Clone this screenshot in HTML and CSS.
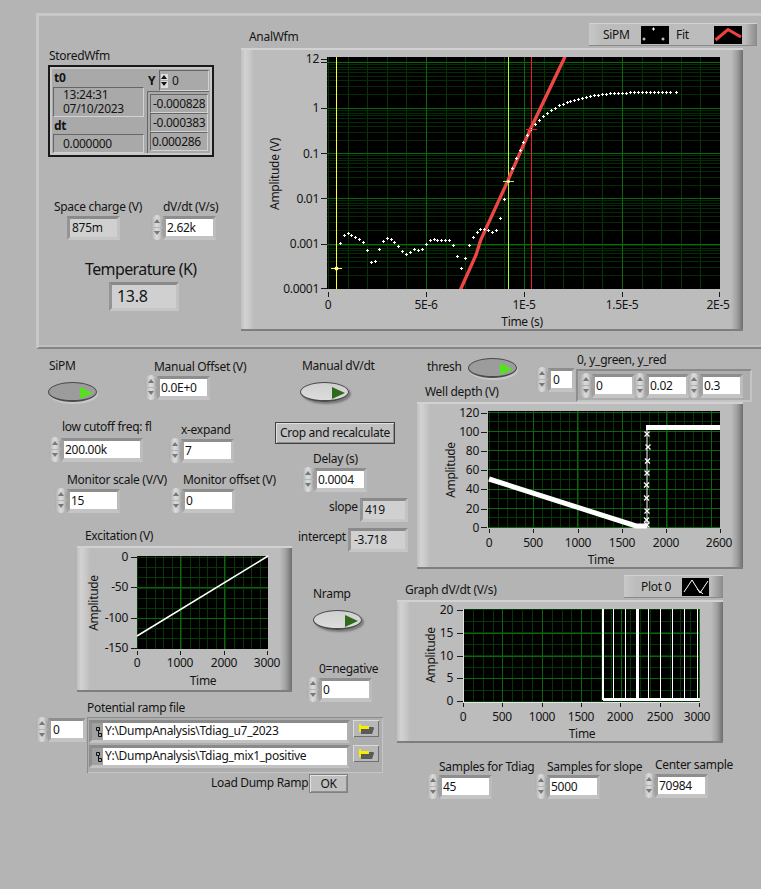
FILE: index.html
```html
<!DOCTYPE html>
<html lang="en">
<head>
<meta charset="utf-8">
<title>AnalWfm front panel</title>
<link rel="stylesheet" href="styles.css">
</head>
<body>
<main class="panel">
  <svg width="0" height="0" class="defs">
    <defs>
      <marker id="plus" markerUnits="userSpaceOnUse" markerWidth="15" markerHeight="15" refX="7.5" refY="7.5" viewBox="0 0 15 15"><path d="M3 7.5H12M7.5 3V12" stroke="#fff" stroke-width="3" shape-rendering="crispEdges"/></marker>
      <marker id="cross" markerUnits="userSpaceOnUse" markerWidth="7" markerHeight="7" refX="3.5" refY="3.5" viewBox="0 0 7 7"><path d="M1 1L6 6M6 1L1 6" stroke="#fff" stroke-width="1.2"/></marker>
      <path id="dec" d="M327 -13.5H720M327 -21.5H720M327 -27.5H720M327 -31.5H720M327 -35.5H720M327 -38.5H720M327 -40.5H720M327 -43.5H720"/>
      <symbol id="folder" viewBox="0 0 15 10"><path d="M2 3H14.500L15 4.500L13 10H2Z" fill="#5a5a5a"/><path d="M0 0H2V2H10V5H2V8H0Z" fill="#f4f000"/></symbol>
      <symbol id="pathicon" viewBox="0 0 6 10"><path d="M.5.5H3.500V3.500H.5ZM2.500 3.500V6.500M2.500 6.500H5.500V9.500H2.500Z" fill="none" stroke="#111"/></symbol>
    </defs>
  </svg>

  <div class="frame-top"></div>

  <!-- StoredWfm -->
  <span class="lbl l-stored">StoredWfm</span>
  <section class="wfm">
    <div class="wfm-left">
      <b class="wfm-head">t0</b>
      <div class="sunk stamp"><span>13:24:31</span><span>07/10/2023</span></div>
      <b class="wfm-head">dt</b>
      <div class="sunk delta">0.000000</div>
    </div>
    <div class="wfm-right">
      <div class="wfm-y">
        <b>Y</b>
        <div class="sunk yidx"><span class="mini"><i></i><i></i></span><span>0</span></div>
      </div>
      <div class="sunk arr">
        <div class="cell">-0.000828</div>
        <div class="cell">-0.000383</div>
        <div class="cell cell-s">0.000286</div>
      </div>
    </div>
  </section>

  <span class="lbl l-space">Space charge (V)</span>
  <div class="ind i-space">875m</div>
  <span class="lbl l-dvdt">dV/dt (V/s)</span>
  <div class="num n-dvdt"><span class="spin"><i></i><i></i></span><span class="val">2.62k</span></div>
  <span class="lbl lbl-big l-temp">Temperature (K)</span>
  <div class="ind ind-big i-temp">13.8</div>

  <!-- AnalWfm graph -->
  <span class="lbl l-anal">AnalWfm</span>
  <div class="legend lg-anal">
    <span>SiPM</span>
    <svg class="swatch" viewBox="0 0 28 18"><path d="M11 3H14M12.500 1.500V4.500M1.500 13H4.500M3 11.500V14.500M20.500 13H23.500M22 11.500V14.500" stroke="#fff" fill="none"/></svg>
    <span class="lg-gap">Fit</span>
    <svg class="swatch" viewBox="0 0 28 18"><path d="M1.500 14L14 3.500L27 11" stroke="#f04040" stroke-width="3" fill="none"/></svg>
  </div>
  <div class="graph g-anal">
    <svg class="plot" width="502" height="283" viewBox="241 48 502 283">
      <rect x="327" y="57" width="393" height="232"/>
      <g class="minor">
        <line x1="328" x2="720" y1="173" y2="173" stroke-width="232" stroke-dasharray="1 18.6"/>
        <use href="#dec" y="289"/><use href="#dec" y="244"/><use href="#dec" y="199"/><use href="#dec" y="154"/><use href="#dec" y="108"/>
      </g>
      <g class="major">
        <line x1="426" x2="720" y1="173" y2="173" stroke-width="232" stroke-dasharray="1 97"/>
        <path d="M327 62.500H720M327 108.500H720M327 153.500H720M327 198.500H720M327 244.500H720"/>
      </g>
      <path class="tick" d="M321 59.500H327M321 62.500H327M321 108.500H327M321 153.500H327M321 198.500H327M321 244.500H327M321 288.500H327M328.500 292V297M426.500 292V297M524.500 292V297M622.500 292V297M719.500 292V297"/>
      <path class="cur" stroke="#ffff20" d="M336.500 57V289"/>
      <path class="cur" stroke="#a8ff30" d="M508.500 57V289"/>
      <path class="cur" stroke="#f02020" d="M531.500 57V289"/>
      <svg x="327" y="57" width="393" height="232" viewBox="261 141 1179 696">
        <polyline class="fit" points="660,842 708,735 722,690 800,520 870,360 975,140"/>
        <polyline class="dots" points="302,701 314,676 326,670 335,676 347,682 359,688 371,697 383,721 395,757 407,754 419,718 431,694 443,685 455,688 464,697 476,709 488,724 500,733 512,727 524,718 536,721 548,718 560,703 572,691 584,688 592,691 605,691 617,691 629,691 641,706 653,739 665,775 677,745 689,706 701,682 713,667 722,658 734,658 746,661 758,667 770,661 782,626 794,568 806,515 818,476 830,445 842,421 851,397 863,376 875,358 887,343 899,331 911,319 923,310 935,301 947,295 959,286 971,283 983,277 992,274 1004,271 1016,268 1028,265 1040,262 1052,259 1064,256 1076,255 1088,253 1100,252 1112,250 1124,250 1136,250 1148,250 1160,250 1172,247 1184,247 1196,247 1208,247 1220,247 1232,247 1244,247 1256,247 1268,247 1280,247 1292,247 1310,247"/>
      </svg>
      <path class="cur" stroke="#ffff20" d="M331 268.500H342"/><circle cx="336.500" cy="268.500" r="2" fill="#ffffa0"/>
      <path class="cur" stroke="#a8ff30" d="M503 181.500H514"/><circle cx="508.500" cy="181.500" r="1.500" fill="#e8ffc0"/>
      <path class="cur" stroke="#f02020" d="M526 129.500H537"/>
      <g class="ax">
        <text x="319" y="63" text-anchor="end">12</text>
        <text x="319" y="112" text-anchor="end">1</text>
        <text x="319" y="158" text-anchor="end">0.1</text>
        <text x="319" y="203" text-anchor="end">0.01</text>
        <text x="319" y="248" text-anchor="end">0.001</text>
        <text x="319" y="293" text-anchor="end">0.0001</text>
        <text x="328" y="309" text-anchor="middle">0</text>
        <text x="426" y="309" text-anchor="middle">5E-6</text>
        <text x="524" y="309" text-anchor="middle">1E-5</text>
        <text x="622" y="309" text-anchor="middle">1.5E-5</text>
        <text x="718" y="309" text-anchor="middle">2E-5</text>
        <text x="522" y="326" text-anchor="middle">Time (s)</text>
        <text transform="translate(279 174) rotate(-90)" text-anchor="middle">Amplitude (V)</text>
      </g>
    </svg>
  </div>

  <!-- Middle controls -->
  <span class="lbl l-sipm">SiPM</span>
  <div class="toggle on t-sipm"></div>
  <span class="lbl l-manoff">Manual Offset (V)</span>
  <div class="num n-manoff"><span class="spin"><i></i><i></i></span><span class="val">0.0E+0</span></div>
  <span class="lbl l-mandv">Manual dV/dt</span>
  <div class="toggle off t-mandv"></div>

  <span class="lbl l-low">low cutoff freq: fl</span>
  <div class="num n-low"><span class="spin"><i></i><i></i></span><span class="val val-wide">200.00k</span></div>
  <span class="lbl l-xexp">x-expand</span>
  <div class="num n-xexp"><span class="spin"><i></i><i></i></span><span class="val">7</span></div>
  <button class="btn b-crop">Crop and recalculate</button>
  <span class="lbl l-delay">Delay (s)</span>
  <div class="num n-delay"><span class="spin"><i></i><i></i></span><span class="val">0.0004</span></div>
  <span class="lbl l-monscale">Monitor scale (V/V)</span>
  <div class="num n-monscale"><span class="spin"><i></i><i></i></span><span class="val">15</span></div>
  <span class="lbl l-monoff">Monitor offset (V)</span>
  <div class="num n-monoff"><span class="spin"><i></i><i></i></span><span class="val">0</span></div>
  <span class="lbl l-slope">slope</span>
  <div class="ind i-slope">419</div>
  <span class="lbl l-intercept">intercept</span>
  <div class="ind i-intercept">-3.718</div>

  <!-- Excitation graph -->
  <span class="lbl l-exc">Excitation (V)</span>
  <div class="graph g-exc">
    <svg class="plot" width="215" height="146" viewBox="77 546 215 146">
      <rect x="137" y="556" width="131" height="93"/>
      <g class="minor">
        <line x1="137" x2="268" y1="602.500" y2="602.500" stroke-width="93" stroke-dasharray="1 7.800"/>
        <line x1="202.500" x2="202.500" y1="557" y2="649" stroke-width="131" stroke-dasharray="1 9.170"/>
      </g>
      <g class="major">
        <line x1="180" x2="268" y1="602.500" y2="602.500" stroke-width="93" stroke-dasharray="1 43"/>
        <path d="M137 587.500H268M137 618.500H268"/>
      </g>
      <path class="tick" d="M131 557.500H137M131 587.500H137M131 618.500H137M131 648.500H137M137.500 651V655M180.500 651V655M224.500 651V655M267.500 651V655"/>
      <path class="trace" d="M137 636L268 556"/>
      <g class="ax">
        <text x="128" y="561" text-anchor="end">0</text>
        <text x="128" y="591" text-anchor="end">-50</text>
        <text x="128" y="622" text-anchor="end">-100</text>
        <text x="128" y="652" text-anchor="end">-150</text>
        <text x="137" y="667" text-anchor="middle">0</text>
        <text x="180" y="667" text-anchor="middle">1000</text>
        <text x="224" y="667" text-anchor="middle">2000</text>
        <text x="267" y="667" text-anchor="middle">3000</text>
        <text x="203" y="685" text-anchor="middle">Time</text>
        <text transform="translate(98 603) rotate(-90)" text-anchor="middle">Amplitude</text>
      </g>
    </svg>
  </div>

  <span class="lbl l-nramp">Nramp</span>
  <div class="toggle off t-nramp"></div>
  <span class="lbl l-neg">0=negative</span>
  <div class="num n-neg"><span class="spin"><i></i><i></i></span><span class="val">0</span></div>

  <!-- Potential ramp file -->
  <span class="lbl l-ramp">Potential ramp file</span>
  <div class="num n-idx1"><span class="spin"><i></i><i></i></span><span class="val val-idx">0</span></div>
  <div class="paths">
    <div class="path-row">
      <div class="path"><span class="path-ico"><svg width="6" height="10"><use href="#pathicon"/></svg></span><span class="path-txt">Y:\DumpAnalysis\Tdiag_u7_2023</span></div>
      <button class="browse"><svg width="15" height="10"><use href="#folder"/></svg></button>
    </div>
    <div class="path-row">
      <div class="path"><span class="path-ico"><svg width="6" height="10"><use href="#pathicon"/></svg></span><span class="path-txt">Y:\DumpAnalysis\Tdiag_mix1_positive</span></div>
      <button class="browse"><svg width="15" height="10"><use href="#folder"/></svg></button>
    </div>
  </div>
  <span class="lbl l-load">Load Dump Ramp</span>
  <button class="btn b-ok">OK</button>

  <!-- Right column -->
  <span class="lbl l-thresh">thresh</span>
  <div class="toggle on t-thresh"></div>
  <div class="num n-idx0"><span class="spin"><i></i><i></i></span><span class="val val-idx">0</span></div>
  <span class="lbl l-yset">0, y_green, y_red</span>
  <div class="yset">
    <div class="num-in"><span class="spin"><i></i><i></i></span><span class="val val-s">0</span></div>
    <div class="num-in"><span class="spin"><i></i><i></i></span><span class="val val-s">0.02</span></div>
    <div class="num-in"><span class="spin"><i></i><i></i></span><span class="val val-s">0.3</span></div>
  </div>

  <span class="lbl l-well">Well depth (V)</span>
  <div class="graph g-well">
    <svg class="plot" width="326" height="167" viewBox="417 402 326 167">
      <rect x="488" y="411" width="232" height="117"/>
      <g class="minor">
        <line x1="489" x2="720" y1="469.500" y2="469.500" stroke-width="117" stroke-dasharray="1 7.880"/>
        <line x1="604" x2="604" y1="528" y2="411" stroke-width="232" stroke-dasharray="1 8.600"/>
      </g>
      <g class="major">
        <line x1="533" x2="720" y1="469.500" y2="469.500" stroke-width="117" stroke-dasharray="1 43.400"/>
        <line x1="604" x2="604" y1="528" y2="411" stroke-width="232" stroke-dasharray="1 18.200"/>
      </g>
      <path class="tick" d="M481 413.500H487M481 432.500H487M481 451.500H487M481 470.500H487M481 489.500H487M481 509.500H487M481 527.500H487M489.500 529V533M533.500 529V533M578.500 529V533M622.500 529V533M666.500 529V533M720.500 529V533"/>
      <path class="thick" d="M489 479L636 526L647 526"/>
      <path class="thin" d="M647 528V428"/>
      <path class="thicker" d="M646 427.500H720"/>
      <polyline class="xmarks" points="647,525 646.500,520 647,511 646.500,498 646.500,485 647,473 647.500,461 648,447 647,434"/>
      <g class="ax">
        <text x="479" y="417" text-anchor="end">120</text>
        <text x="479" y="436" text-anchor="end">100</text>
        <text x="479" y="455" text-anchor="end">80</text>
        <text x="479" y="474" text-anchor="end">60</text>
        <text x="479" y="493" text-anchor="end">40</text>
        <text x="479" y="513" text-anchor="end">20</text>
        <text x="479" y="532" text-anchor="end">0</text>
        <text x="489" y="547" text-anchor="middle">0</text>
        <text x="533" y="547" text-anchor="middle">500</text>
        <text x="578" y="547" text-anchor="middle">1000</text>
        <text x="622" y="547" text-anchor="middle">1500</text>
        <text x="666" y="547" text-anchor="middle">2000</text>
        <text x="719" y="547" text-anchor="middle">2600</text>
        <text x="601" y="564" text-anchor="middle">Time</text>
        <text transform="translate(455 470) rotate(-90)" text-anchor="middle">Amplitude</text>
      </g>
    </svg>
  </div>

  <span class="lbl l-graphdv">Graph dV/dt (V/s)</span>
  <div class="legend lg-plot">
    <span>Plot 0</span>
    <svg class="swatch" viewBox="0 0 27 18"><path d="M2 14L10 2L18 15L26 3M15 11L21 16" stroke="#fff" fill="none"/></svg>
  </div>
  <div class="graph g-dv">
    <svg class="plot" width="326" height="143" viewBox="397 600 326 143">
      <rect x="463" y="609" width="237" height="93"/>
      <g class="minor">
        <line x1="463" x2="700" y1="655.500" y2="655.500" stroke-width="93" stroke-dasharray="1 8.850"/>
        <line x1="581.500" x2="581.500" y1="702" y2="609" stroke-width="237" stroke-dasharray="1 10.500"/>
      </g>
      <g class="major">
        <line x1="463" x2="700" y1="655.500" y2="655.500" stroke-width="93" stroke-dasharray="1 38.400"/>
        <path d="M463 633.500H700M463 656.500H700M463 678.500H700"/>
      </g>
      <path class="tick" d="M457 610.500H463M457 633.500H463M457 656.500H463M457 678.500H463M457 701.500H463M463.500 703V707M502.500 703V707M542.500 703V707M581.500 703V707M620.500 703V707M660.500 703V707M699.500 703V707"/>
      <path class="axis-l" d="M463.500 609V702.500H700"/>
      <path class="spikes" d="M603 609V700M613.500 609V700M625.500 609V700M648.500 609V700M660.500 609V700M672.500 609V700M684.500 609V700M697.500 609V700"/>
      <path class="spike-b" d="M637.500 609V700M603 699.500H700"/>
      <g class="ax">
        <text x="453" y="614" text-anchor="end">20</text>
        <text x="453" y="637" text-anchor="end">15</text>
        <text x="453" y="660" text-anchor="end">10</text>
        <text x="453" y="682" text-anchor="end">5</text>
        <text x="453" y="705" text-anchor="end">0</text>
        <text x="463" y="721" text-anchor="middle">0</text>
        <text x="502" y="721" text-anchor="middle">500</text>
        <text x="542" y="721" text-anchor="middle">1000</text>
        <text x="581" y="721" text-anchor="middle">1500</text>
        <text x="620" y="721" text-anchor="middle">2000</text>
        <text x="660" y="721" text-anchor="middle">2500</text>
        <text x="697" y="721" text-anchor="middle">3000</text>
        <text x="582" y="738" text-anchor="middle">Time</text>
        <text transform="translate(435 655) rotate(-90)" text-anchor="middle">Amplitude</text>
      </g>
    </svg>
  </div>

  <span class="lbl l-tdiag">Samples for Tdiag</span>
  <div class="num n-tdiag"><span class="spin"><i></i><i></i></span><span class="val">45</span></div>
  <span class="lbl l-sslope">Samples for slope</span>
  <div class="num n-sslope"><span class="spin"><i></i><i></i></span><span class="val">5000</span></div>
  <span class="lbl l-center">Center sample</span>
  <div class="num n-center"><span class="spin"><i></i><i></i></span><span class="val">70984</span></div>
</main>
</body>
</html>
```

FILE: styles.css
```css
* { box-sizing: border-box; }
html, body { margin: 0; padding: 0; background: #b4b4b4; }
.panel {
  position: relative;
  width: 761px;
  height: 889px;
  overflow: hidden;
  background: #b4b4b4;
  font: 12px/16px "Noto Sans", "Open Sans", sans-serif;
  letter-spacing: -.3px;
  color: #141414;
}
.defs { position: absolute; }
.panel > * { position: absolute; }

/* decorations */
.frame-top {
  left: 36px; top: 13px; width: 740px; height: 336px;
  border-top: 3px solid #c8c8c8;
  border-left: 3px solid #c8c8c8;
  border-bottom: 2px solid #858585;
  box-shadow: inset 0 -2px 0 #c0c0c0;
}

/* free labels */
.lbl { white-space: nowrap; }
.lbl-big { font-size: 16px; line-height: 20px; letter-spacing: -.6px; }
.l-stored { left: 49px; top: 48px; }
.l-space { left: 54px; top: 199px; }
.l-dvdt { left: 163px; top: 199px; }
.l-temp { left: 85px; top: 259px; }
.l-anal { left: 249px; top: 29px; }
.l-sipm { left: 49px; top: 358px; }
.l-manoff { left: 154px; top: 359px; }
.l-mandv { left: 302px; top: 358px; }
.l-low { left: 62px; top: 419px; }
.l-xexp { left: 181px; top: 422px; }
.l-monscale { left: 67px; top: 472px; }
.l-monoff { left: 183px; top: 472px; }
.l-delay { left: 313px; top: 451px; }
.l-slope { left: 329px; top: 499px; }
.l-intercept { left: 298px; top: 529px; }
.l-exc { left: 85px; top: 528px; }
.l-nramp { left: 313px; top: 586px; }
.l-neg { left: 319px; top: 661px; }
.l-ramp { left: 87px; top: 700px; }
.l-load { left: 211px; top: 775px; }
.l-thresh { left: 427px; top: 359px; }
.l-yset { left: 577px; top: 352px; }
.l-well { left: 425px; top: 384px; }
.l-graphdv { left: 405px; top: 582px; }
.l-tdiag { left: 439px; top: 759px; }
.l-sslope { left: 547px; top: 759px; }
.l-center { left: 655px; top: 757px; }

/* numeric controls */
.num { display: flex; align-items: center; }
.num-in { display: flex; align-items: center; }
.spin { display: flex; flex-direction: column; gap: 1px; width: 12px; height: 25px; flex: none; }
.spin i {
  position: relative;
  flex: 1;
  background: linear-gradient(90deg, #aaa, #dcdcdc 45%, #cdcdcd 70%, #989898);
  border-radius: 6px 6px 1px 1px / 7px 7px 1px 1px;
}
.spin i + i { border-radius: 1px 1px 6px 6px / 1px 1px 7px 7px; }
.spin i::after {
  content: "";
  position: absolute;
  left: 3px; top: 4px;
  border-left: 3px solid transparent;
  border-right: 3px solid transparent;
  border-bottom: 4px solid #777;
}
.spin i + i::after { border-bottom: 0; border-top: 4px solid #777; top: 3px; }
.val {
  display: block;
  width: 53px;
  height: 24px;
  padding-left: 1px;
  line-height: 17px;
  background: #fff;
  border-style: solid;
  border-width: 3px 3px 4px 3px;
  border-color: #8e8e8e #bcbcbc #c4c4c4 #a0a0a0;
  overflow: hidden;
  white-space: nowrap;
}
.val-wide { width: 82px; }
.val-idx { width: 38px; padding-left: 2px; }
.val-s { width: 43px; }
.n-dvdt { left: 151px; top: 215px; }
.n-manoff { left: 145px; top: 375px; }
.n-low { left: 49px; top: 437px; }
.n-xexp { left: 169px; top: 438px; }
.n-monscale { left: 55px; top: 488px; }
.n-monoff { left: 170px; top: 488px; }
.n-delay { left: 302px; top: 467px; }
.n-neg { left: 307px; top: 677px; }
.n-tdiag { left: 427px; top: 774px; }
.n-sslope { left: 535px; top: 774px; }
.n-center { left: 643px; top: 773px; }
.n-idx0 { left: 536px; top: 367px; }
.n-idx0 .val { width: 27px; }
.n-idx1 { left: 36px; top: 717px; }
.yset {
  left: 576px; top: 369px; width: 176px; height: 33px;
  display: flex; align-items: center; gap: 1px;
  padding-left: 4px;
  background: #adadad;
  border: 2px solid;
  border-color: #8a8a8a #c4c4c4 #c4c4c4 #8e8e8e;
}
.yset .spin { margin-left: -2px; }

/* indicators */
.ind {
  padding-left: 2px;
  background: #d0d0d0;
  border: 3px solid;
  border-color: #8a8a8a #c2c2c2 #c6c6c6 #949494;
  line-height: 18px;
}
.ind-big { font-size: 16px; line-height: 23px; padding-left: 5px; letter-spacing: -.3px; }
.i-space { left: 67px; top: 216px; width: 53px; height: 24px; }
.i-temp { left: 109px; top: 282px; width: 70px; height: 29px; }
.i-slope { left: 360px; top: 498px; width: 48px; height: 24px; }
.i-intercept { left: 348px; top: 528px; width: 60px; height: 24px; padding-left: 3px; }

/* StoredWfm cluster */
.wfm {
  left: 48px; top: 65px; width: 166px; height: 92px;
  display: flex; gap: 3px;
  padding: 1px 3px 0 3px;
  background: #a9a9a9;
  border: 2px solid #1a1a1a;
  box-shadow: inset 0 0 0 2px #c8c8c8;
}
.wfm-left { width: 91px; display: flex; flex-direction: column; }
.wfm-right { width: 62px; display: flex; flex-direction: column; }
.wfm-head { display: block; height: 14px; line-height: 14px; padding-left: 1px; margin-top: 2px; }
.wfm-head:first-child { margin-top: 3px; }
.wfm-head + .stamp { margin-top: 2px; }
.sunk {
  border: 1px solid;
  border-color: #666 #d2d2d2 #d2d2d2 #666;
  background: #a9a9a9;
}
.stamp { height: 30px; display: flex; flex-direction: column; padding-left: 9px; line-height: 14px; }
.delta { height: 19px; margin-top: 1px; padding-left: 9px; line-height: 18px; }
.wfm-y { display: flex; gap: 4px; height: 21px; align-items: center; margin-top: 2px; }
.wfm-y b { padding: 0 0 0 1px; width: 8px; }
.yidx { flex: 1; display: flex; align-items: center; gap: 4px; height: 21px; padding-left: 1px; }
.mini { display: flex; flex-direction: column; width: 7px; height: 14px; gap: 1px; }
.mini i { flex: 1; background: #ddd; position: relative; }
.mini i::after {
  content: ""; position: absolute; left: 0; top: 1px;
  border-left: 3.5px solid transparent; border-right: 3.5px solid transparent;
  border-bottom: 4px solid #111;
}
.mini i + i::after { border-bottom: 0; border-top: 4px solid #111; }
.arr { height: 62px; padding: 2px 1px 1px 2px; border-bottom: 0; border-right: 0; }
.cell {
  height: 19px; line-height: 18px; padding-left: 2px;
  border: 1px solid; border-color: #666 #d2d2d2 #d2d2d2 #666;
}
.cell-s { padding-left: 1px; }

/* graphs */
.graph {
  background: linear-gradient(90deg, #bfbfbf 0, #d2d2d2 4px, #c8c8c8 9px, #bcbcbc 13px, #bcbcbc calc(100% - 12px), #a0a0a0 calc(100% - 6px), #6e6e6e 100%);
  box-shadow: inset 0 2px 0 #d2d2d2, inset 0 -2px 0 #7e7e7e;
}
.g-anal { left: 241px; top: 48px; width: 502px; height: 283px; }
.g-exc { left: 77px; top: 546px; width: 215px; height: 146px; }
.g-well { left: 417px; top: 402px; width: 326px; height: 167px; }
.g-dv { left: 397px; top: 600px; width: 326px; height: 143px; }
.plot { display: block; }
.plot rect { fill: #000; }
.minor line, .minor path { stroke: #053605; fill: none; shape-rendering: crispEdges; }
.minor use { stroke: #042c04; fill: none; shape-rendering: crispEdges; }
.major line, .major path { stroke: #0a680a; fill: none; shape-rendering: crispEdges; }
.tick { stroke: #1a1a1a; fill: none; shape-rendering: crispEdges; }
.cur { fill: none; stroke-width: 1; shape-rendering: crispEdges; }
.ax text { font: 12px "Noto Sans", "Open Sans", sans-serif; fill: #141414; }
.fit { fill: none; stroke: #f04545; stroke-width: 10; }
.dots { fill: none; marker-start: url(#plus); marker-mid: url(#plus); marker-end: url(#plus); }
.trace { stroke: #fff; stroke-width: 1.500; fill: none; }
.thick { stroke: #fff; stroke-width: 5; fill: none; }
.thicker { stroke: #fff; stroke-width: 5; fill: none; }
.thin { stroke: #fff; stroke-width: 1; fill: none; }
.xmarks { fill: none; marker-start: url(#cross); marker-mid: url(#cross); marker-end: url(#cross); }
.axis-l { stroke: #e4e4e4; fill: none; shape-rendering: crispEdges; }
.spikes { stroke: #fff; stroke-width: 1.500; fill: none; shape-rendering: crispEdges; }
.spike-b { stroke: #fff; stroke-width: 3; fill: none; shape-rendering: crispEdges; }

/* legends */
.legend {
  display: grid;
  align-items: center;
  background: linear-gradient(90deg, #c8c8c8, #bcbcbc 12px, #bcbcbc calc(100% - 12px), #8a8a8a);
  box-shadow: inset 0 1px 0 #d2d2d2, inset 0 -1px 0 #8a8a8a;
}
.lg-anal { left: 589px; top: 23px; width: 168px; height: 23px; padding-left: 14px; grid-template-columns: 38px 28px 45px 28px; }
.lg-plot { left: 624px; top: 575px; width: 99px; height: 23px; padding-left: 17px; grid-template-columns: 41px 27px; }
.lg-gap { padding-left: 7px; }
.swatch { display: block; width: 100%; height: 18px; background: #000; }

/* toggles */
.toggle {
  width: 49px; height: 20px;
  border-radius: 50%;
  border: 1px solid #4a4a4a;
  border-bottom-width: 2px;
}
.toggle::after {
  content: "";
  position: absolute;
  left: 31px; top: 4px;
  border-top: 6px solid transparent;
  border-bottom: 6px solid transparent;
  border-left: 13px solid #55e020;
}
.toggle.on { background: #9c9c9c; box-shadow: 1px 2px 1px #cacaca; }
.toggle.off { background: linear-gradient(#cfcfcf, #dcdcdc); box-shadow: 2px 2px 2px #7a7a7a; }
.toggle.off::after { border-left-color: #2f6a1c; }
.t-sipm { left: 48px; top: 382px; }
.t-mandv { left: 300px; top: 382px; }
.t-thresh { left: 468px; top: 358px; }
.t-nramp { left: 313px; top: 610px; }

/* buttons */
.btn {
  font: inherit; color: inherit; padding: 0; letter-spacing: inherit;
  background: #c0c0c0;
  box-shadow: inset 1px 1px 0 #e2e2e2, inset -1px -1px 0 #8f8f8f;
}
.b-crop { left: 275px; top: 422px; width: 120px; height: 22px; border: 1px solid #3f3f3f; }
.b-ok { left: 309px; top: 774px; width: 39px; height: 19px; border: 1px solid #808080; line-height: 15px; }

/* path controls */
.paths {
  left: 87px; top: 717px; width: 296px; height: 56px;
  display: flex; flex-direction: column; gap: 2px;
  padding: 3px 0 0 2px;
  background: #adadad;
  box-shadow: inset 1px 1px 0 #8c8c8c, inset -1px -1px 0 #c6c6c6;
}
.path-row { display: flex; gap: 3px; align-items: flex-start; }
.path {
  width: 261px; height: 23px; display: flex;
  border: 3px solid; border-color: #8a8a8a #b0b0b0 #c2c2c2 #8e8e8e;
}
.path-ico { width: 11px; display: flex; align-items: center; padding-left: 4px; background: #a0a0a0; flex: none; }
.path-ico svg { flex: none; }
.path-txt { flex: 1; background: #fff; line-height: 16px; padding-left: 2px; white-space: nowrap; overflow: hidden; }
.browse {
  width: 26px; height: 17px; padding: 0;
  display: flex; align-items: center; justify-content: center;
  background: #b8b8b8;
  border: 0;
  box-shadow: inset 1px 1px 0 #dadada, inset -1px -1px 0 #707070;
}
```
